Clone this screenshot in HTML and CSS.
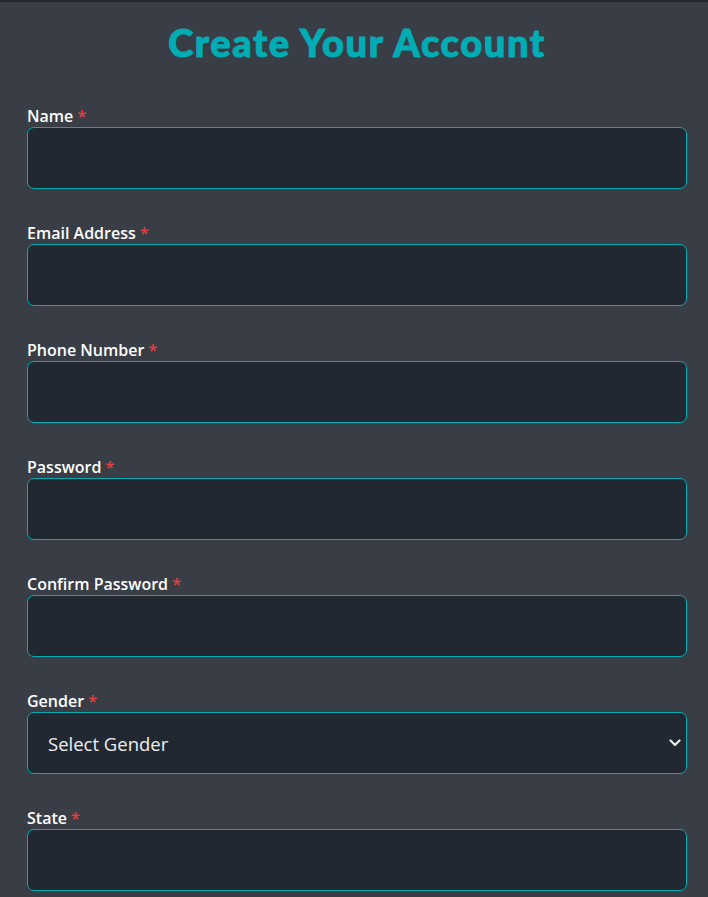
FILE: index.html
```html
<!DOCTYPE html>
<html lang="en">
<head>
<meta charset="utf-8">
<title>Create Your Account</title>
<link rel="stylesheet" href="styles.css">
</head>
<body>
<div class="topbar"></div>
<main class="card">
  <h1 class="title">Create Your Account</h1>
  <form class="form">
    <div class="field">
      <label class="label">Name <span class="req">*</span></label>
      <input class="input" type="text">
    </div>
    <div class="field">
      <label class="label">Email Address <span class="req">*</span></label>
      <input class="input" type="email">
    </div>
    <div class="field">
      <label class="label">Phone Number <span class="req">*</span></label>
      <input class="input" type="tel">
    </div>
    <div class="field">
      <label class="label">Password <span class="req">*</span></label>
      <input class="input" type="password">
    </div>
    <div class="field">
      <label class="label">Confirm Password <span class="req">*</span></label>
      <input class="input" type="password">
    </div>
    <div class="field">
      <label class="label">Gender <span class="req">*</span></label>
      <div class="select-wrap">
        <select class="input select">
          <option>Select Gender</option>
          <option>Male</option>
          <option>Female</option>
        </select>
        <svg class="chev" width="12" height="8" viewBox="0 0 12 8"><path d="M1.5 1.5 L6 6 L10.5 1.5" fill="none" stroke="#eeeeee" stroke-width="2.2" stroke-linecap="round" stroke-linejoin="round"/></svg>
      </div>
    </div>
    <div class="field">
      <label class="label">State <span class="req">*</span></label>
      <input class="input" type="text">
    </div>
  </form>
</main>
</body>
</html>
```
FILE: styles.css
```css
html, body {
  margin: 0;
  padding: 0;
  background: #393e46;
}
body {
  font-family: "Open Sans", "Noto Sans", sans-serif;
  color: #eeeeee;
}
.topbar {
  height: 2px;
  background: #222831;
}
.card {
  padding: 0 21px 0 27px;
}
.title {
  margin: 0;
  padding-top: 20px;
  height: 104px;
  box-sizing: border-box;
  text-align: center;
  font-family: "Lato", sans-serif;
  font-weight: 900;
  font-size: 38px;
  line-height: 40px;
  color: #00adb5;
  letter-spacing: 1.6px;
  -webkit-text-stroke: 1px #00adb5;
}
.form {
  display: flex;
  flex-direction: column;
  gap: 34px;
}
.field {
  display: flex;
  flex-direction: column;
  gap: 1px;
}
.label {
  font-size: 16px;
  font-weight: 600;
  line-height: 20px;
  color: #ffffff;
}
.req {
  color: #e53e3e;
}
.input {
  box-sizing: border-box;
  width: 100%;
  height: 62px;
  background: #222831;
  border: 1px solid #00adb5;
  border-radius: 7px;
  color: #eeeeee;
  font-family: "Open Sans", sans-serif;
  font-size: 18.5px;
  padding: 0 20px;
  outline: none;
}
.select-wrap {
  position: relative;
}
.select {
  appearance: none;
  -webkit-appearance: none;
  display: block;
}
.chev {
  position: absolute;
  right: 6px;
  top: 27px;
  pointer-events: none;
}
```
